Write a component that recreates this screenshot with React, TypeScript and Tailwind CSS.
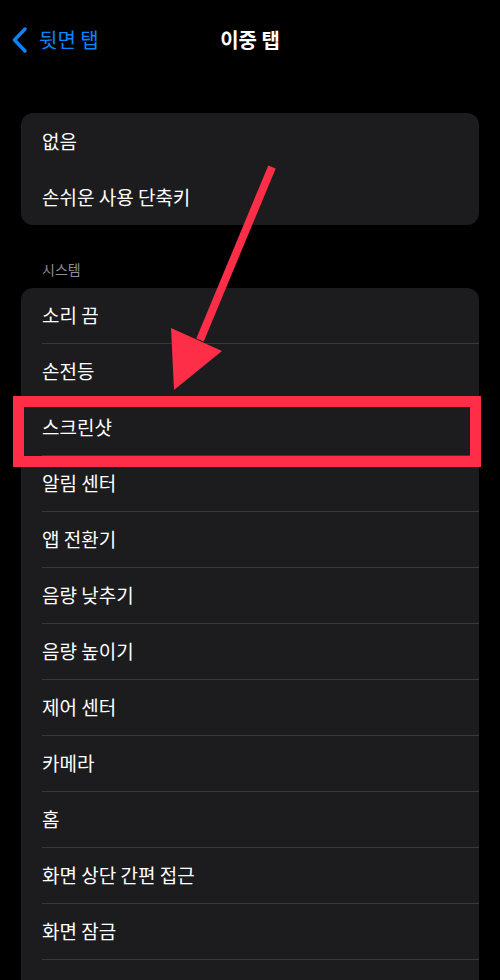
const font = { fontFamily: '"Noto Sans CJK KR", "Noto Sans", sans-serif' }

const topItems = ['없음', '손쉬운 사용 단축키']

const systemItems = [
  '소리 끔',
  '손전등',
  '스크린샷',
  '알림 센터',
  '앱 전환기',
  '음량 낮추기',
  '음량 높이기',
  '제어 센터',
  '카메라',
  '홈',
  '화면 상단 간편 접근',
  '화면 잠금',
  '',
]

function Row({ label, last }: { label: string; last?: boolean }) {
  return (
    <div className="pl-[21px]">
      <div
        className={
          'flex h-[56px] items-center text-[19px] text-white ' +
          (last ? '' : 'border-b border-[#38383a]')
        }
      >
        {label}
      </div>
    </div>
  )
}

export default function App() {
  return (
    <div className="relative h-[980px] w-[500px] overflow-hidden bg-black" style={font}>
      {/* nav bar */}
      <div className="relative flex h-[80px] items-center pl-[12px]">
        <div className="flex items-center gap-[11px] text-[#0a84ff]">
          <svg width="16" height="26" viewBox="0 0 16 26" fill="none">
            <polyline
              points="13,2 2.5,13 13,24"
              stroke="#0a84ff"
              strokeWidth="3.4"
              strokeLinecap="round"
              strokeLinejoin="round"
            />
          </svg>
          <span className="text-[20px]">뒷면 탭</span>
        </div>
        <div className="pointer-events-none absolute left-0 right-0 text-center text-[20px] font-bold text-white">
          이중 탭
        </div>
      </div>

      <div className="px-[21px] pt-[33px]">
        <div className="overflow-hidden rounded-[12px] bg-[#1c1c1e]">
          {topItems.map((t) => (
            <div key={t} className="flex h-[56px] items-center pl-[21px] text-[19px] text-white">
              {t}
            </div>
          ))}
        </div>

        <div className="mt-[34px] pb-[8px] pl-[21px] text-[14px] text-[#8d8d93]">시스템</div>

        <div className="overflow-hidden rounded-t-[12px] bg-[#1c1c1e]">
          {systemItems.map((t, i) => (
            <Row key={i} label={t} last={i === systemItems.length - 1} />
          ))}
        </div>
      </div>

      {/* annotation */}
      <div className="pointer-events-none absolute left-[13px] top-[396px] h-[71px] w-[468px] border-[11px] border-[#ff2e48]" />
      <svg
        className="pointer-events-none absolute left-0 top-0"
        width="500"
        height="980"
        viewBox="0 0 500 980"
      >
        <line x1="272" y1="167" x2="200" y2="340" stroke="#ff2e48" strokeWidth="8" />
        <polygon points="171,328 222,351 174,390" fill="#ff2e48" />
      </svg>
    </div>
  )
}
